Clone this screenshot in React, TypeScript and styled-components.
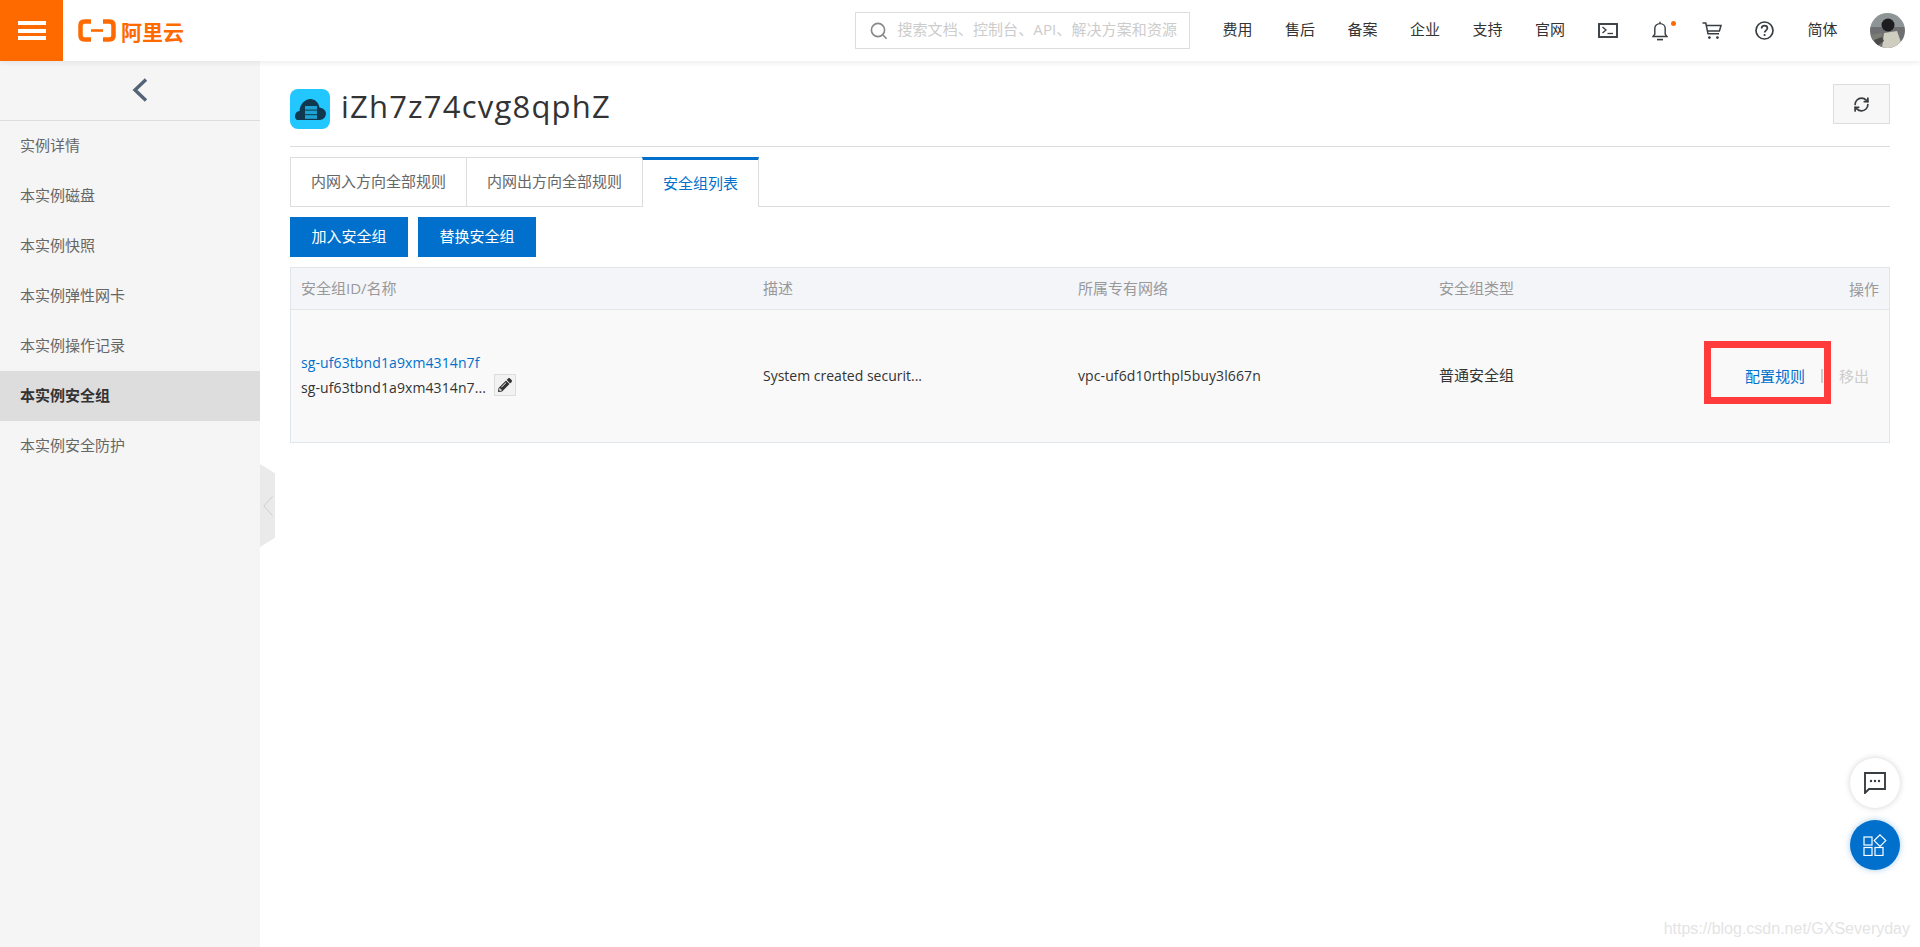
import React from 'react';
import styled, { createGlobalStyle } from 'styled-components';
import { FaPencilAlt } from 'react-icons/fa';
import { RefreshCw } from 'lucide-react';

const navBefore = ['费用', '售后', '备案', '企业', '支持', '官网'];
const sideItems = ['实例详情', '本实例磁盘', '本实例快照', '本实例弹性网卡', '本实例操作记录', '本实例安全组', '本实例安全防护'];
const tabs = ['内网入方向全部规则', '内网出方向全部规则', '安全组列表'];

const App = () => {
  return (
    <Page>
      <GlobalStyle />
      <Header>
        <MenuButton>
          <MenuBar />
          <MenuBar />
          <MenuBar />
        </MenuButton>
        <Logo>
          <svg width="38" height="23" viewBox="0 0 38 23">
            <path d="M13 2.5H6.5Q2.5 2.5 2.5 6.5V16.5Q2.5 20.5 6.5 20.5H13" fill="none" stroke="#ff6a00" strokeWidth="4.5" strokeLinejoin="round" />
            <path d="M25 2.5H31.5Q35.5 2.5 35.5 6.5V16.5Q35.5 20.5 31.5 20.5H25" fill="none" stroke="#ff6a00" strokeWidth="4.5" strokeLinejoin="round" />
            <rect x="13" y="10.2" width="12" height="2.6" fill="#ff6a00" />
          </svg>
          <LogoText>阿里云</LogoText>
        </Logo>
        <Spacer />
        <SearchBox>
          <svg width="18" height="18" viewBox="0 0 18 18" fill="none" stroke="#888" strokeWidth="1.6">
            <circle cx="8" cy="8" r="6.6" />
            <path d="M12.8 12.8L16.6 16.8" />
          </svg>
          <SearchHint>搜索文档、控制台、API、解决方案和资源</SearchHint>
        </SearchBox>
        <TopNav>
          {navBefore.map((t) => (
            <NavText key={t}>{t}</NavText>
          ))}
          <TerminalIcon width="20" height="15" viewBox="0 0 20 15" fill="none" stroke="#373d41">
            <rect x="1" y="1" width="18" height="13" strokeWidth="1.9" />
            <path d="M4.5 4L8 7L4.5 10" strokeWidth="1.3" />
            <path d="M9.5 10.5H15" strokeWidth="1.3" />
          </TerminalIcon>
          <BellWrap>
            <svg width="16" height="20" viewBox="0 0 16 20" fill="none" stroke="#373d41" strokeWidth="1.4">
              <path d="M1 15.5H15L13.2 13.2V7.5C13.2 4.5 11 2.6 8 2.6C5 2.6 2.8 4.5 2.8 7.5V13.2Z" />
              <path d="M8 2.6V0.8" />
              <path d="M5 18.6H11" strokeWidth="1.6" />
            </svg>
            <BellDot />
          </BellWrap>
          <svg width="20" height="18" viewBox="0 0 20 18" fill="none" stroke="#373d41" strokeWidth="1.5">
            <path d="M0.5 1H3.8L6 11.8H17" />
            <path d="M4.4 3.6H19L17.4 9H5.4" />
            <circle cx="7.4" cy="15.6" r="1.4" fill="#373d41" stroke="none" />
            <circle cx="15.4" cy="15.6" r="1.4" fill="#373d41" stroke="none" />
          </svg>
          <svg width="19" height="19" viewBox="0 0 19 19" fill="none" stroke="#373d41" strokeWidth="1.7">
            <circle cx="9.5" cy="9.5" r="8.5" />
            <path d="M6.6 7.4C6.6 5.6 8 4.7 9.5 4.7C11.1 4.7 12.4 5.7 12.4 7.2C12.4 9.2 9.6 9.4 9.6 11.6" />
            <circle cx="9.6" cy="14" r="1.1" fill="#373d41" stroke="none" />
          </svg>
          <NavText>简体</NavText>
          <svg width="35" height="35" viewBox="0 0 35 35">
            <defs>
              <clipPath id="avatarClip">
                <circle cx="17.5" cy="17.5" r="17.5" />
              </clipPath>
            </defs>
            <g clipPath="url(#avatarClip)">
              <rect width="35" height="14" fill="#8f9496" />
              <rect y="14" width="35" height="21" fill="#6d6f70" />
              <path d="M0 22L12 20L10 35H0Z" fill="#7c7c76" />
              <path d="M14 20L27 18L33 35H12Z" fill="#cfcdbf" />
              <circle cx="18" cy="12" r="6.5" fill="#1d1d1f" />
              <path d="M4 27L12 24L14 28L7 33Z" fill="#4a4a46" />
            </g>
          </svg>
        </TopNav>
      </Header>
      <Body>
        <Sidebar>
          <SideBack>
            <svg width="16" height="24" viewBox="0 0 16 24" fill="none" stroke="#546478" strokeWidth="3.4">
              <path d="M14 1.5L3 12L14 22.5" />
            </svg>
          </SideBack>
          {sideItems.map((t, i) => (
            <SideItem key={t} $active={i === 5}>
              {t}
            </SideItem>
          ))}
          <SideToggle>
            <svg width="10" height="20" viewBox="0 0 10 20" fill="none" stroke="#ccc" strokeWidth="1">
              <path d="M9.5 0.5L0.8 10L9.5 19.5" />
            </svg>
          </SideToggle>
        </Sidebar>
        <Main>
          <TitleRow>
            <TitleGroup>
              <svg width="40" height="40" viewBox="0 0 40 40">
                <rect width="40" height="40" rx="8" fill="#22c7ff" />
                <path d="M8 31C3.5 31 4 22.5 9.5 22C10 14 16 10 20.5 10C25 10 28.5 13.5 29.5 18.5C35 19 37.5 24 35 28C33.8 30 31.5 31 29.5 31Z" fill="#10394f" />
                <rect x="15" y="17" width="12" height="3.6" fill="#22c7ff" opacity="0.75" />
                <rect x="15" y="21.6" width="12" height="3.6" fill="#22c7ff" opacity="0.75" />
                <rect x="15" y="26.2" width="12" height="3.6" fill="#22c7ff" opacity="0.75" />
              </svg>
              <Title>iZh7z74cvg8qphZ</Title>
            </TitleGroup>
            <RefreshButton>
              <RefreshCw size={17} color="#373d41" strokeWidth={2.4} />
            </RefreshButton>
          </TitleRow>
          <TabBar>
            {tabs.map((t, i) => (
              <Tab key={t} $active={i === 2}>
                {t}
              </Tab>
            ))}
          </TabBar>
          <ActionBar>
            <PrimaryButton>加入安全组</PrimaryButton>
            <PrimaryButton>替换安全组</PrimaryButton>
          </ActionBar>
          <Table>
            <HeadRow>
              <HeadCell>安全组ID/名称</HeadCell>
              <HeadCell>描述</HeadCell>
              <HeadCell>所属专有网络</HeadCell>
              <HeadCell>安全组类型</HeadCell>
              <ActionCell>操作</ActionCell>
            </HeadRow>
            <DataRow>
              <Cell>
                <LinkText>sg-uf63tbnd1a9xm4314n7f</LinkText>
                <NameLine>
                  sg-uf63tbnd1a9xm4314n7...
                  <EditButton>
                    <FaPencilAlt size={14} color="#333" />
                  </EditButton>
                </NameLine>
              </Cell>
              <Cell>System created securit...</Cell>
              <IdCell>vpc-uf6d10rthpl5buy3l667n</IdCell>
              <TypeCell>普通安全组</TypeCell>
              <ActionCell>
                <ConfigLink>
                  配置规则
                  <RedMark />
                </ConfigLink>
                <Separator />
                <Disabled>移出</Disabled>
              </ActionCell>
            </DataRow>
          </Table>
        </Main>
      </Body>
      <FloatButton>
        <svg width="22" height="22" viewBox="0 0 22 22" fill="none" stroke="#373d41" strokeWidth="1.9">
          <path d="M1 1H21V17H5L1 21Z" />
          <circle cx="7" cy="9" r="1.2" fill="#373d41" stroke="none" />
          <circle cx="11" cy="9" r="1.2" fill="#373d41" stroke="none" />
          <circle cx="15" cy="9" r="1.2" fill="#373d41" stroke="none" />
        </svg>
      </FloatButton>
      <FloatButton $primary>
        <svg width="24" height="22" viewBox="0 0 24 22" fill="none" stroke="#fff" strokeWidth="1.2">
          <rect x="1" y="3" width="8" height="8" />
          <rect x="1" y="13.5" width="8" height="8" />
          <rect x="12" y="13.5" width="8" height="8" />
          <path d="M17 0.8L22.8 6.6L17 12.4L11.2 6.6Z" />
        </svg>
      </FloatButton>
      <Watermark>https://blog.csdn.net/GXSeveryday</Watermark>
    </Page>
  );
};

export default App;

const GlobalStyle = createGlobalStyle`
  html, body {
    margin: 0;
    padding: 0;
    background: #fff;
    font-family: "Open Sans", "Noto Sans CJK SC", sans-serif;
  }
`;

const Page = styled.div`
  display: flex;
  flex-direction: column;
  height: 947px;
  overflow: hidden;
  position: relative;
`;

const Header = styled.header`
  display: flex;
  align-items: center;
  flex: 0 0 61px;
  padding-right: 15px;
  background: #fff;
  box-shadow: 0 2px 5px rgba(0, 0, 0, 0.07);
  position: relative;
  z-index: 2;
`;

const MenuButton = styled.div`
  display: flex;
  flex-direction: column;
  justify-content: center;
  align-items: center;
  gap: 3.5px;
  width: 63px;
  height: 61px;
  background: #ff6a00;
`;

const MenuBar = styled.span`
  display: block;
  width: 28px;
  height: 4px;
  background: #fff;
`;

const Logo = styled.div`
  display: flex;
  align-items: center;
  gap: 5px;
  margin-left: 15px;
`;

const LogoText = styled.span`
  font-size: 21px;
  font-weight: 700;
  color: #ff6a00;
  font-family: "Noto Sans CJK SC", sans-serif;
`;

const Spacer = styled.div`
  flex: 1;
`;

const SearchBox = styled.div`
  display: flex;
  align-items: center;
  gap: 9px;
  box-sizing: border-box;
  width: 335px;
  height: 37px;
  padding-left: 14px;
  border: 1px solid #ddd;
  margin-right: 32px;
`;

const SearchHint = styled.span`
  padding-bottom: 4px;
  font-size: 15px;
  letter-spacing: 0.1px;
  color: #ccc;
  white-space: nowrap;
`;

const TopNav = styled.nav`
  display: flex;
  align-items: center;
  gap: 33px;
`;

const NavText = styled.span`
  padding-bottom: 4px;
  margin-right: -0.5px;
  font-size: 15px;
  color: #333;
`;

const TerminalIcon = styled.svg`
  margin: 0 1px;
`;

const BellWrap = styled.span`
  display: flex;
  position: relative;
  margin-right: 1px;
`;

const BellDot = styled.span`
  position: absolute;
  top: 0;
  right: -8px;
  width: 5px;
  height: 5px;
  border-radius: 50%;
  background: #ff6a00;
`;

const Body = styled.div`
  display: flex;
  flex: 1;
`;

const Sidebar = styled.aside`
  flex: 0 0 260px;
  background: #f5f5f5;
  position: relative;
`;

const SideBack = styled.div`
  display: flex;
  justify-content: center;
  align-items: center;
  box-sizing: border-box;
  height: 60px;
  padding: 0 0 2px 20px;
  border-bottom: 1px solid #ddd;
`;

const SideItem = styled.div<{ $active?: boolean }>`
  display: flex;
  align-items: center;
  box-sizing: border-box;
  height: 50px;
  padding: 0 0 4px 20px;
  font-size: 15px;
  font-weight: ${(p) => (p.$active ? 700 : 400)};
  color: ${(p) => (p.$active ? '#333' : '#666')};
  background: ${(p) => (p.$active ? '#ddd' : 'transparent')};
`;

const SideToggle = styled.div`
  position: absolute;
  left: 100%;
  top: 403px;
  display: flex;
  align-items: center;
  justify-content: flex-end;
  box-sizing: border-box;
  width: 15px;
  height: 83px;
  padding-right: 2px;
  background: #eaeaea;
  clip-path: polygon(0 0, 100% 11%, 100% 89%, 0 100%);
`;

const Main = styled.main`
  flex: 1;
  padding: 23px 30px 0;
`;

const TitleRow = styled.div`
  display: flex;
  justify-content: space-between;
  align-items: flex-start;
  height: 62px;
  border-bottom: 1px solid #ddd;
`;

const TitleGroup = styled.div`
  display: flex;
  align-items: center;
  gap: 11px;
  margin-top: 5px;
`;

const Title = styled.h1`
  margin: -3px 0 3px;
  font-size: 31px;
  font-weight: 400;
  line-height: 40px;
  letter-spacing: 1.2px;
  color: #333;
`;

const RefreshButton = styled.button`
  display: flex;
  align-items: center;
  justify-content: center;
  width: 57px;
  height: 40px;
  padding: 0;
  background: #f7f7f7;
  border: 1px solid #ddd;
`;

const TabBar = styled.div`
  display: flex;
  margin-top: 10px;
  border-bottom: 1px solid #ddd;
`;

const Tab = styled.div<{ $active?: boolean }>`
  display: flex;
  align-items: center;
  box-sizing: border-box;
  height: ${(p) => (p.$active ? '50px' : '49px')};
  padding: 0 20px 3px;
  margin-bottom: ${(p) => (p.$active ? '-1px' : '0')};
  font-size: 15px;
  color: ${(p) => (p.$active ? '#0070cc' : '#666')};
  background: #fff;
  border-left: 1px solid #ddd;
  border-right: ${(p) => (p.$active ? '1px solid #ddd' : '0')};
  border-top: ${(p) => (p.$active ? '3px solid #0070cc' : '1px solid #ddd')};
`;

const ActionBar = styled.div`
  display: flex;
  gap: 10px;
  margin-top: 10px;
`;

const PrimaryButton = styled.button`
  height: 40px;
  padding: 0 21.5px 3px;
  border: 0;
  background: #0070cc;
  color: #fff;
  font-family: inherit;
  font-size: 15px;
`;

const Table = styled.div`
  margin-top: 10px;
  border: 1px solid #e1e6eb;
`;

const Columns = styled.div`
  display: grid;
  grid-template-columns: 462px 315px 361px 1fr 180px;
  align-items: center;
  font-size: 14px;
`;

const HeadRow = styled(Columns)`
  height: 41px;
  font-size: 15px;
  color: #999;
  background: #f4f5f9;
  border-bottom: 1px solid #e1e6eb;
`;

const DataRow = styled(Columns)`
  height: 132px;
  color: #333;
  background: #f9f9f9;
`;

const Cell = styled.div`
  padding: 0 0 2px 10px;
  line-height: 25px;
  white-space: nowrap;
`;

const HeadCell = styled(Cell)`
  padding-bottom: 0;
`;

const IdCell = styled(Cell)`
  letter-spacing: 0.1px;
`;

const TypeCell = styled(Cell)`
  font-size: 15px;
`;

const ActionCell = styled.div`
  display: flex;
  justify-content: flex-end;
  align-items: center;
  padding: 0 10px 1px 0;
  font-size: 15px;
`;

const LinkText = styled.div`
  letter-spacing: 0.1px;
  color: #0070cc;
`;

const NameLine = styled.div`
  display: flex;
  align-items: center;
  gap: 8px;
  letter-spacing: 0.1px;
`;

const EditButton = styled.span`
  display: flex;
  align-items: center;
  justify-content: center;
  box-sizing: border-box;
  width: 22px;
  height: 22px;
  background: #f2f2f2;
  border: 1px solid #ddd;
  margin-top: -5px;
`;

const ConfigLink = styled.span`
  position: relative;
  color: #0070cc;
  font-size: 15px;
`;

const RedMark = styled.span`
  position: absolute;
  left: -41px;
  top: -24px;
  box-sizing: border-box;
  width: 127px;
  height: 63px;
  border: 7px solid #ff3b3b;
`;

const Separator = styled.span`
  width: 2px;
  height: 14px;
  margin: 0 16px 0 16px;
  background: #ccc;
`;

const Disabled = styled.span`
  color: #ccc;
  margin-right: 10px;
`;

const FloatButton = styled.div<{ $primary?: boolean }>`
  position: absolute;
  right: 20px;
  top: ${(p) => (p.$primary ? '820px' : '758px')};
  display: flex;
  align-items: center;
  justify-content: center;
  width: 50px;
  height: 50px;
  border-radius: 50%;
  background: ${(p) => (p.$primary ? '#0070cc' : '#fff')};
  box-shadow: ${(p) => (p.$primary ? '0 0 6px rgba(0, 112, 204, 0.35)' : '0 0 6px rgba(0, 0, 0, 0.18)')};
`;

const Watermark = styled.div`
  position: absolute;
  right: 10px;
  top: 919px;
  font-family: "Liberation Sans", sans-serif;
  font-size: 16px;
  line-height: 20px;
  color: #e4e4e4;
`;
